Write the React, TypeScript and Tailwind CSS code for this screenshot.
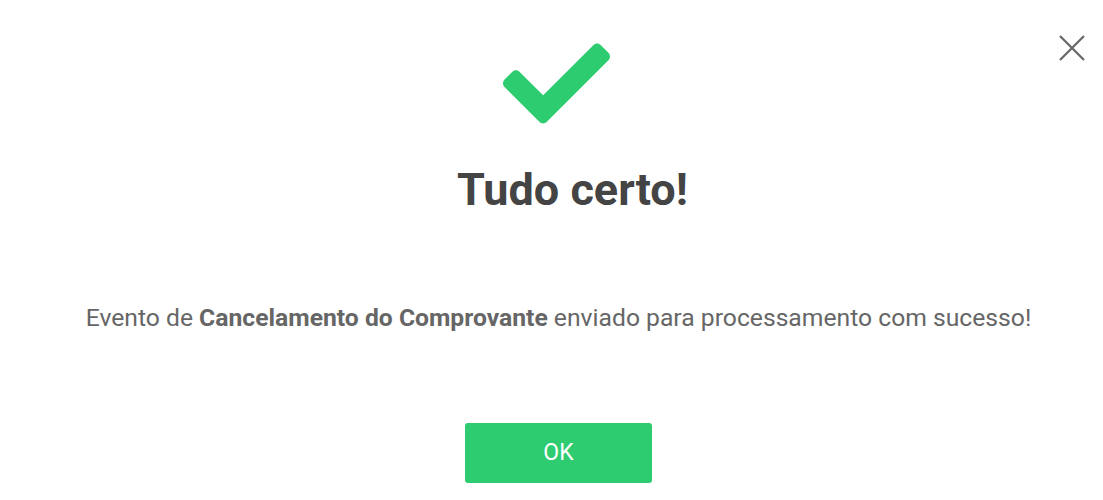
import React from 'react';
import { FaCheck } from 'react-icons/fa';

export default function App() {
  return (
    <div
      className="relative w-[1103px] h-[500px] bg-white flex flex-col items-center pl-[14px]"
      style={{ fontFamily: 'Roboto, "Liberation Sans", sans-serif' }}
    >
      {/* Close */}
      <button className="absolute right-[17px] top-[34px] w-[28px] h-[28px] flex items-center justify-center">
        <svg width="28" height="28" viewBox="0 0 28 28">
          <path d="M2 2L26 26M26 2L2 26" stroke="#666" strokeWidth="2.2" />
        </svg>
      </button>

      <FaCheck size={107} color="#2ecc71" className="mt-[30px] mr-[5px]" />

      <h1 className="mt-[25px] pl-[28px] text-[45px] leading-[56px] font-bold text-[#444]">Tudo certo!</h1>

      <p className="mt-[86px] text-[24.7px] leading-[28px] text-[#666]">
        Evento de <strong className="font-bold">Cancelamento do Comprovante</strong> enviado para processamento com sucesso!
      </p>

      <button className="mt-[91px] w-[187px] h-[60px] rounded-[3px] bg-[#2ecc71] text-white text-[23px]">
        OK
      </button>
    </div>
  );
}
